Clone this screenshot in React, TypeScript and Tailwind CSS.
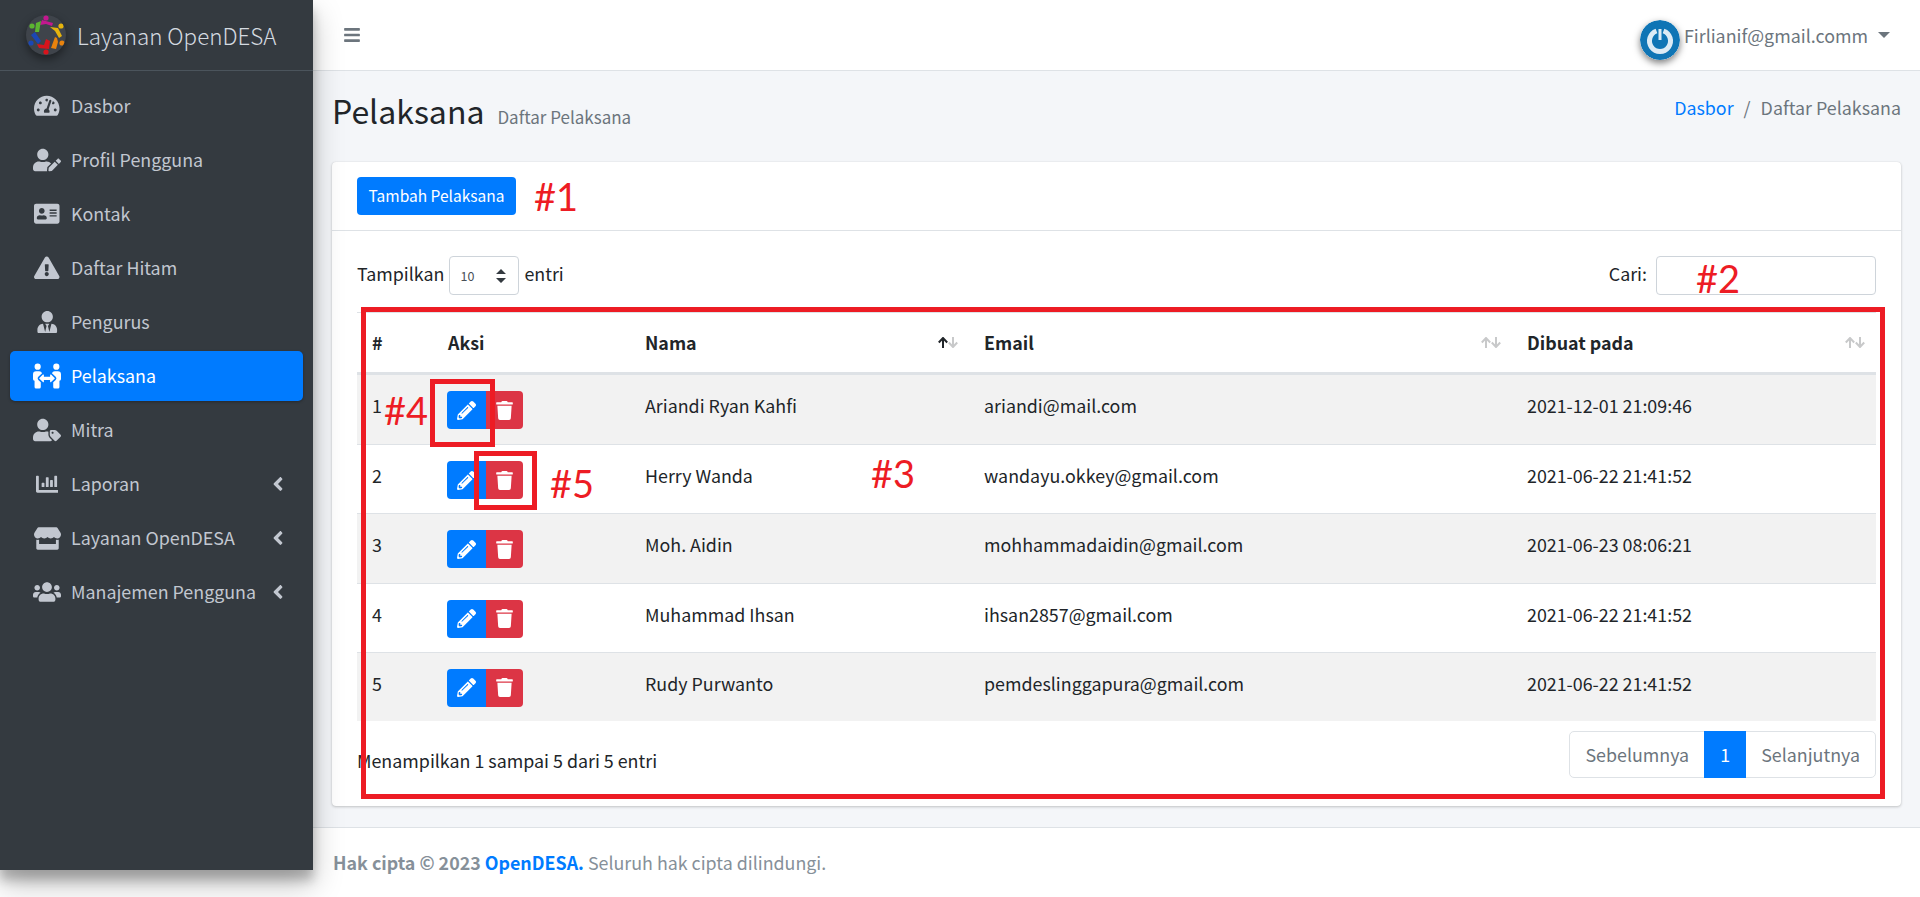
import React from 'react';
import {
  FaAddressCard,
  FaAngleLeft,
  FaBars,
  FaChartBar,
  FaExclamationTriangle,
  FaPencilAlt,
  FaPeopleArrows,
  FaStore,
  FaTachometerAlt,
  FaTrash,
  FaUserEdit,
  FaUserTag,
  FaUserTie,
  FaUsers,
} from 'react-icons/fa';

const fontStack = '"Noto Sans CJK SC", "Noto Sans", sans-serif';

const menu = [
  { label: 'Dasbor', icon: FaTachometerAlt, size: 25.5 },
  { label: 'Profil Pengguna', icon: FaUserEdit, size: 28 },
  { label: 'Kontak', icon: FaAddressCard, size: 25.5 },
  { label: 'Daftar Hitam', icon: FaExclamationTriangle, size: 25.5 },
  { label: 'Pengurus', icon: FaUserTie, size: 22.5 },
  { label: 'Pelaksana', icon: FaPeopleArrows, size: 28, active: true },
  { label: 'Mitra', icon: FaUserTag, size: 28 },
  { label: 'Laporan', icon: FaChartBar, size: 22.5, more: true },
  { label: 'Layanan OpenDESA', icon: FaStore, size: 27, more: true },
  { label: 'Manajemen Pengguna', icon: FaUsers, size: 28, more: true },
];

const rows = [
  ['1', 'Ariandi Ryan Kahfi', 'ariandi@mail.com', '2021-12-01 21:09:46'],
  ['2', 'Herry Wanda', 'wandayu.okkey@gmail.com', '2021-06-22 21:41:52'],
  ['3', 'Moh. Aidin', 'mohhammadaidin@gmail.com', '2021-06-23 08:06:21'],
  ['4', 'Muhammad Ihsan', 'ihsan2857@gmail.com', '2021-06-22 21:41:52'],
  ['5', 'Rudy Purwanto', 'pemdeslinggapura@gmail.com', '2021-06-22 21:41:52'],
];

function Logo() {
  return (
    <svg viewBox="0 0 40 40" className="w-10 h-10 rounded-full bg-[#3f444b] shadow-[0_4px_10px_rgba(0,0,0,0.45)] shrink-0">
      <circle cx="20" cy="3" r="2.6" fill="#c4178f" />
      <path d="M14 10 L16 5 L27 8 L26 11 L20 9 Z" fill="#c4178f" />
      <circle cx="6" cy="11" r="2.6" fill="#5cb531" />
      <path d="M9 17 L10 8 L15 6 L13 17 Z" fill="#5cb531" />
      <circle cx="35" cy="11" r="2.6" fill="#e6b40c" />
      <path d="M24 12 L32 13 L36 21 L33 23 L29 16 Z" fill="#e6b40c" />
      <circle cx="36" cy="28" r="2.6" fill="#e9830d" />
      <path d="M25 33 L29 22 L31 23 L32 27 L30 34 Z" fill="#e9830d" />
      <circle cx="20" cy="37" r="2.6" fill="#d8141c" />
      <path d="M11 29 L18 30 L20 24 L24 26 L23 34 L13 33 Z" fill="#d8141c" />
      <circle cx="5" cy="28" r="2.6" fill="#1b47b5" />
      <path d="M5 20 L9 17 L15 26 L12 29 Z" fill="#1b47b5" />
    </svg>
  );
}

function Avatar() {
  return (
    <svg viewBox="0 0 40 40" className="w-10 h-10 rounded-full translate-y-[5px] shadow-[0_3px_7px_rgba(0,0,0,0.5)] shrink-0">
      <circle cx="20" cy="20" r="20" fill="#0f75b5" />
      <path d="M16.5 11 A10.5 10.5 0 1 0 23.5 11" fill="none" stroke="#dcebf5" strokeWidth="5" />
      <path d="M20 9 V20" stroke="#dcebf5" strokeWidth="3" />
    </svg>
  );
}

function SortIcon({ active }: { active?: boolean }) {
  return (
    <svg viewBox="0 0 20 11" className="w-5 h-[11px]" fill="none" strokeWidth="2">
      <path d="M5 11 V1 M0.8 5.5 L5 1 L9.2 5.5" stroke={active ? '#212529' : '#c8c9ca'} />
      <path d="M15 0 V10 M10.8 5.5 L15 10 L19.2 5.5" stroke="#c8c9ca" />
    </svg>
  );
}

function Annotation({ className, children }: { className: string; children: React.ReactNode }) {
  return (
    <span className={`absolute text-[38px] leading-none text-[#ed1c24] font-['Lato',sans-serif] ${className}`}>{children}</span>
  );
}

export default function App() {
  return (
    <div className="relative flex items-start w-full h-[897px] overflow-hidden bg-white text-[17.85px] leading-[29px] text-[#212529]" style={{ fontFamily: fontStack }}>
      {/* Sidebar */}
      <aside className="w-[313px] h-[870px] shrink-0 bg-[#343a40] shadow-[0_14px_28px_rgba(0,0,0,0.25),0_10px_10px_rgba(0,0,0,0.22)] z-10">
        <div className="flex items-center h-[71px] pl-[26px] gap-[11px] border-b border-[#4b545c]">
          <Logo />
          <span className="text-[22.4px] font-light text-[#d5dae0]">Layanan OpenDESA</span>
        </div>
        <nav className="flex flex-col gap-1 px-[10px] pt-[10px]">
          {menu.map((item) => {
            const Icon = item.icon;
            return (
              <div
                key={item.label}
                className={`flex items-center h-[50px] pl-[21px] pr-[14px] rounded-[5px] ${item.active ? 'bg-[#007bff] text-white shadow-[0_1px_3px_rgba(0,0,0,0.3)]' : 'text-[#c2c7d0]'}`}
              >
                <span className="flex justify-center w-8 mr-2">
                  <Icon size={item.size} />
                </span>
                <span className="flex-1 whitespace-nowrap leading-none">{item.label}</span>
                {item.more && <FaAngleLeft size={22} />}
              </div>
            );
          })}
        </nav>
      </aside>

      {/* Main */}
      <div className="flex-1 flex flex-col h-[897px] min-w-0">
        <header className="flex items-center justify-between h-[71px] shrink-0 pl-[30px] pr-[30px] border-b border-[#dee2e6] bg-white">
          <FaBars size={18} className="text-[#6c757d]" />
          <div className="flex items-center text-[#6c757d]">
            <Avatar />
            <span className="ml-[4px]">Firlianif@gmail.comm</span>
            <span className="ml-[10px] w-0 h-0 border-x-[6px] border-x-transparent border-t-[6px] border-t-[#6c757d]"></span>
          </div>
        </header>

        <main className="flex-1 flex flex-col bg-[#f4f6f9] px-[19px] min-h-0">
          <div className="flex items-start justify-between h-[91px] shrink-0">
            <div className="flex items-baseline gap-[13px] pt-[23px]">
              <h1 className="text-[32px] leading-none text-[#212529]">Pelaksana</h1>
              <small className="text-[17px] text-[#6c757d]">Daftar Pelaksana</small>
            </div>
            <div className="flex items-center pt-[22px] text-[#6c757d]">
              <span className="text-[#007bff]">Dasbor</span>
              <span className="px-[10px]">/</span>
              <span>Daftar Pelaksana</span>
            </div>
          </div>

          {/* Card */}
          <section className="h-[644px] bg-white rounded-[4px] shadow-[0_0_1px_rgba(0,0,0,0.125),0_1px_3px_rgba(0,0,0,0.2)]">
            <div className="flex items-center h-[69px] px-[25px] border-b border-[#dee2e6]">
              <button className="h-[38px] w-[159px] rounded-[4px] bg-[#007bff] text-white text-[15.5px] leading-none whitespace-nowrap">
                Tambah Pelaksana
              </button>
            </div>

            <div className="px-[25px] pt-[25px]">
              <div className="flex items-center justify-between h-[39px]">
                <div className="flex items-center">
                  <span className="pb-[5px]">Tampilkan</span>
                  <span className="flex items-center justify-between w-[70px] h-[39px] mx-[5px] pl-[10px] pr-[12px] border border-[#ced4da] rounded-[4px] text-[12.5px] text-[#495057]">
                    10
                    <svg viewBox="0 0 10 14" className="w-[10px] h-[14px]" fill="#343a40">
                      <path d="M5 0 L10 5 H0 Z M5 14 L0 9 H10 Z" />
                    </svg>
                  </span>
                  <span className="pb-[5px]">entri</span>
                </div>
                <div className="flex items-center">
                  <span className="mr-[9px] pb-[4px]">Cari:</span>
                  <span className="w-[220px] h-[39px] border border-[#ced4da] rounded-[4px]"></span>
                </div>
              </div>

              {/* Table */}
              <div className="mt-[17px] border-t border-[#dee2e6]">
                <div className="grid grid-cols-[76px_197px_339px_543px_364px] h-[62px] border-b-[3px] border-[#dee2e6] font-bold">
                  <div className="flex items-center pl-[15px]">#</div>
                  <div className="flex items-center pl-[15px]">Aksi</div>
                  <div className="flex items-center justify-between pl-[15px] pr-[11px]">
                    Nama
                    <SortIcon active />
                  </div>
                  <div className="flex items-center justify-between pl-[15px] pr-[11px]">
                    Email
                    <SortIcon />
                  </div>
                  <div className="flex items-center justify-between pl-[15px] pr-[11px]">
                    Dibuat pada
                    <SortIcon />
                  </div>
                </div>
                {rows.map((row, i) => (
                  <div
                    key={row[0]}
                    className={`grid grid-cols-[76px_197px_339px_543px_364px] h-[69.2px] ${i > 0 ? 'border-t border-[#dee2e6]' : ''} ${i % 2 === 0 ? 'bg-[#f2f2f2]' : 'bg-white'}`}
                  >
                    <div className="pl-[15px] pt-[16px]">{row[0]}</div>
                    <div className="pl-[14px] pt-[16px]">
                      <div className="flex">
                        <span className="flex items-center justify-center w-[39px] h-[38px] rounded-l-[4px] bg-[#007bff] text-white">
                          <FaPencilAlt size={19} />
                        </span>
                        <span className="flex items-center justify-center w-[37px] h-[38px] rounded-r-[4px] bg-[#dc3545] text-white">
                          <FaTrash size={19} />
                        </span>
                      </div>
                    </div>
                    <div className="pl-[15px] pt-[16px]">{row[1]}</div>
                    <div className="pl-[15px] pt-[16px]">{row[2]}</div>
                    <div className="pl-[15px] pt-[16px]">{row[3]}</div>
                  </div>
                ))}
              </div>

              <div className="flex items-start justify-between pt-[10px]">
                <span className="pt-[15px]">Menampilkan 1 sampai 5 dari 5 entri</span>
                <div className="flex h-[47px] border border-[#dee2e6] rounded-[5px] text-[#6c757d]">
                  <span className="flex items-center px-[15px]">Sebelumnya</span>
                  <span className="flex items-center justify-center w-[42px] -my-px bg-[#007bff] text-white">1</span>
                  <span className="flex items-center px-[15px]">Selanjutnya</span>
                </div>
              </div>
            </div>
          </section>
        </main>

        <footer className="flex items-center h-[70px] shrink-0 px-[20px] border-t border-[#dee2e6] bg-white text-[#869099]">
          <strong>Hak cipta © 2023&nbsp;<span className="text-[#007bff]">OpenDESA.</span></strong>
          <span>&nbsp;Seluruh hak cipta dilindungi.</span>
        </footer>
      </div>

      {/* Red review markers drawn over the screenshot */}
      <div className="absolute left-[361px] top-[307px] w-[1524px] h-[492px] border-[5px] border-[#ed1c24] z-20"></div>
      <div className="absolute left-[430px] top-[379px] w-[65px] h-[68px] border-[5px] border-[#ed1c24] z-20"></div>
      <div className="absolute left-[474px] top-[451px] w-[63px] h-[59px] border-[5px] border-[#ed1c24] z-20"></div>
      <Annotation className="left-[534px] top-[177px]">#1</Annotation>
      <Annotation className="left-[1696px] top-[259px]">#2</Annotation>
      <Annotation className="left-[871px] top-[454px]">#3</Annotation>
      <Annotation className="left-[384px] top-[391px]">#4</Annotation>
      <Annotation className="left-[550px] top-[464px]">#5</Annotation>
    </div>
  );
}
